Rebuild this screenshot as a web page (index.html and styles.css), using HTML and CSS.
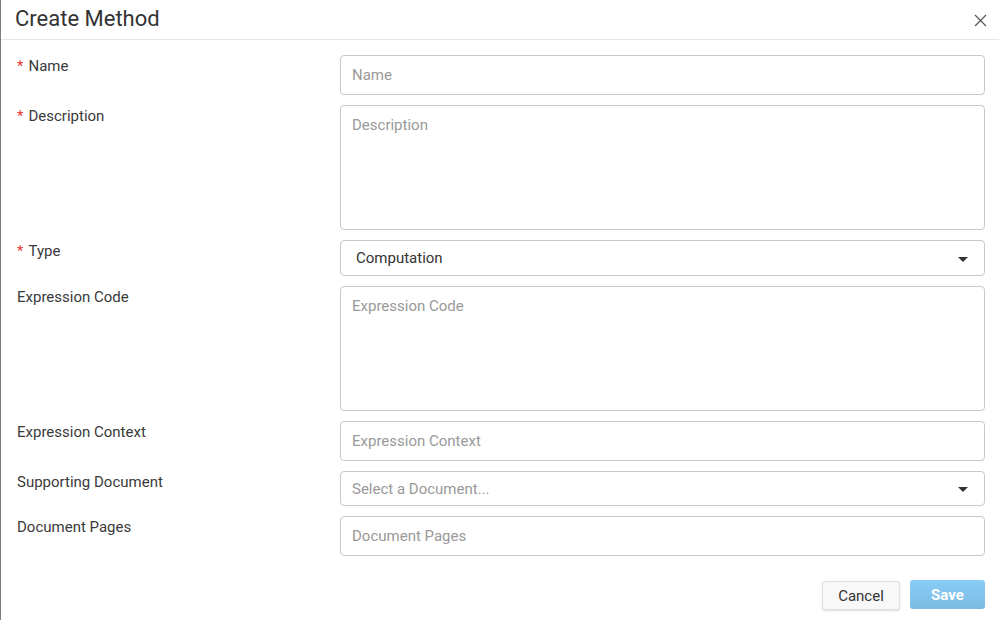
FILE: index.html
```html
<!DOCTYPE html>
<html>
  <head>
    <title>Create Method</title>
    <link rel="stylesheet" href="styles.css">
  </head>
  <body>
    <div class="modal">
      <div class="modal-header">
        <h2>Create Method</h2>
        <button class="close-btn" aria-label="Close">
          <svg width="13" height="13" viewBox="0 0 13 13">
            <path d="M1 1 L12 12 M12 1 L1 12" stroke="#555" stroke-width="1.2" fill="none"/>
          </svg>
        </button>
      </div>

      <form class="modal-body">
        <label class="field-label required">Name</label>
        <input class="field field-md" type="text" placeholder="Name">

        <label class="field-label required">Description</label>
        <textarea class="field field-lg" placeholder="Description"></textarea>

        <label class="field-label required">Type</label>
        <div class="field select">
          <span class="select-value">Computation</span>
          <span class="caret"></span>
        </div>

        <label class="field-label">Expression Code</label>
        <textarea class="field field-lg" placeholder="Expression Code"></textarea>

        <label class="field-label">Expression Context</label>
        <input class="field field-md" type="text" placeholder="Expression Context">

        <label class="field-label">Supporting Document</label>
        <div class="field select select-empty">
          <span class="select-value">Select a Document...</span>
          <span class="caret"></span>
        </div>

        <label class="field-label">Document Pages</label>
        <input class="field field-md" type="text" placeholder="Document Pages">
      </form>

      <div class="modal-footer">
        <button class="btn btn-cancel">Cancel</button>
        <button class="btn btn-save" disabled>Save</button>
      </div>
    </div>
  </body>
</html>
```

FILE: styles.css
```css
* {
  box-sizing: border-box;
  margin: 0;
  padding: 0;
}

body {
  font-family: Roboto, "Liberation Sans", Arial, sans-serif;
  background-color: #7a7f86;
  color: #333;
  height: 620px;
  overflow: hidden;
  padding-left: 1px;
}

/* Ventana del modal */
.modal {
  background-color: #fff;
  height: 620px;
}

.modal-header {
  display: flex;
  align-items: center;
  justify-content: space-between;
  height: 40px;
  padding: 0 12px 0 14px;
  border-bottom: 1px solid #e5e5e5;
}

.modal-header h2 {
  font-size: 22px;
  font-weight: 400;
  color: #333;
  margin-top: -2px;
}

.close-btn {
  border: none;
  background: none;
  cursor: pointer;
  display: flex;
  margin-top: 2px;
}

/* Formulario en dos columnas */
.modal-body {
  display: grid;
  grid-template-columns: 323px 645px;
  row-gap: 10px;
  padding: 15px 0 0 16px;
}

.field-label {
  font-size: 15px;
  line-height: 20px;
  padding-top: 1px;
  color: #3a3a3a;
}

.required::before {
  content: "*";
  color: #e53935;
  margin-right: 5px;
}

.field {
  width: 100%;
  border: 1px solid #c8c8c8;
  border-radius: 4px;
  font-family: inherit;
  font-size: 15px;
  color: #333;
  background-color: #fff;
  padding: 0 11px;
  outline: none;
}

.field::placeholder {
  color: #999;
}

.field-md {
  height: 40px;
}

.field-lg {
  height: 125px;
  padding-top: 9px;
  line-height: 20px;
  resize: none;
}

.select {
  display: flex;
  align-items: center;
  justify-content: space-between;
  height: 36px;
  padding: 0 16px 0 15px;
}

.select-empty {
  height: 35px;
  padding-left: 11px;
}

.select-empty .select-value {
  color: #999;
}

.caret {
  width: 0;
  height: 0;
  border-left: 5px solid transparent;
  border-right: 5px solid transparent;
  border-top: 5px solid #333;
  margin-top: 2px;
}

/* Botones del pie */
.modal-footer {
  display: flex;
  justify-content: flex-end;
  gap: 10px;
  padding: 25px 14px 0 0;
}

.btn {
  font-family: inherit;
  font-size: 15px;
  border-radius: 3px;
  height: 29px;
  cursor: pointer;
}

.btn-cancel {
  width: 78px;
  background-color: #f8f8f8;
  border: 1px solid #e0e0e0;
  color: #333;
  box-shadow: 0 1px 2px rgba(0, 0, 0, 0.15);
}

.btn-save {
  width: 75px;
  border: none;
  color: #fff;
  font-weight: 700;
  background: linear-gradient(#88cdf6, #7bbbe2);
  margin-top: -1px;
}
```
